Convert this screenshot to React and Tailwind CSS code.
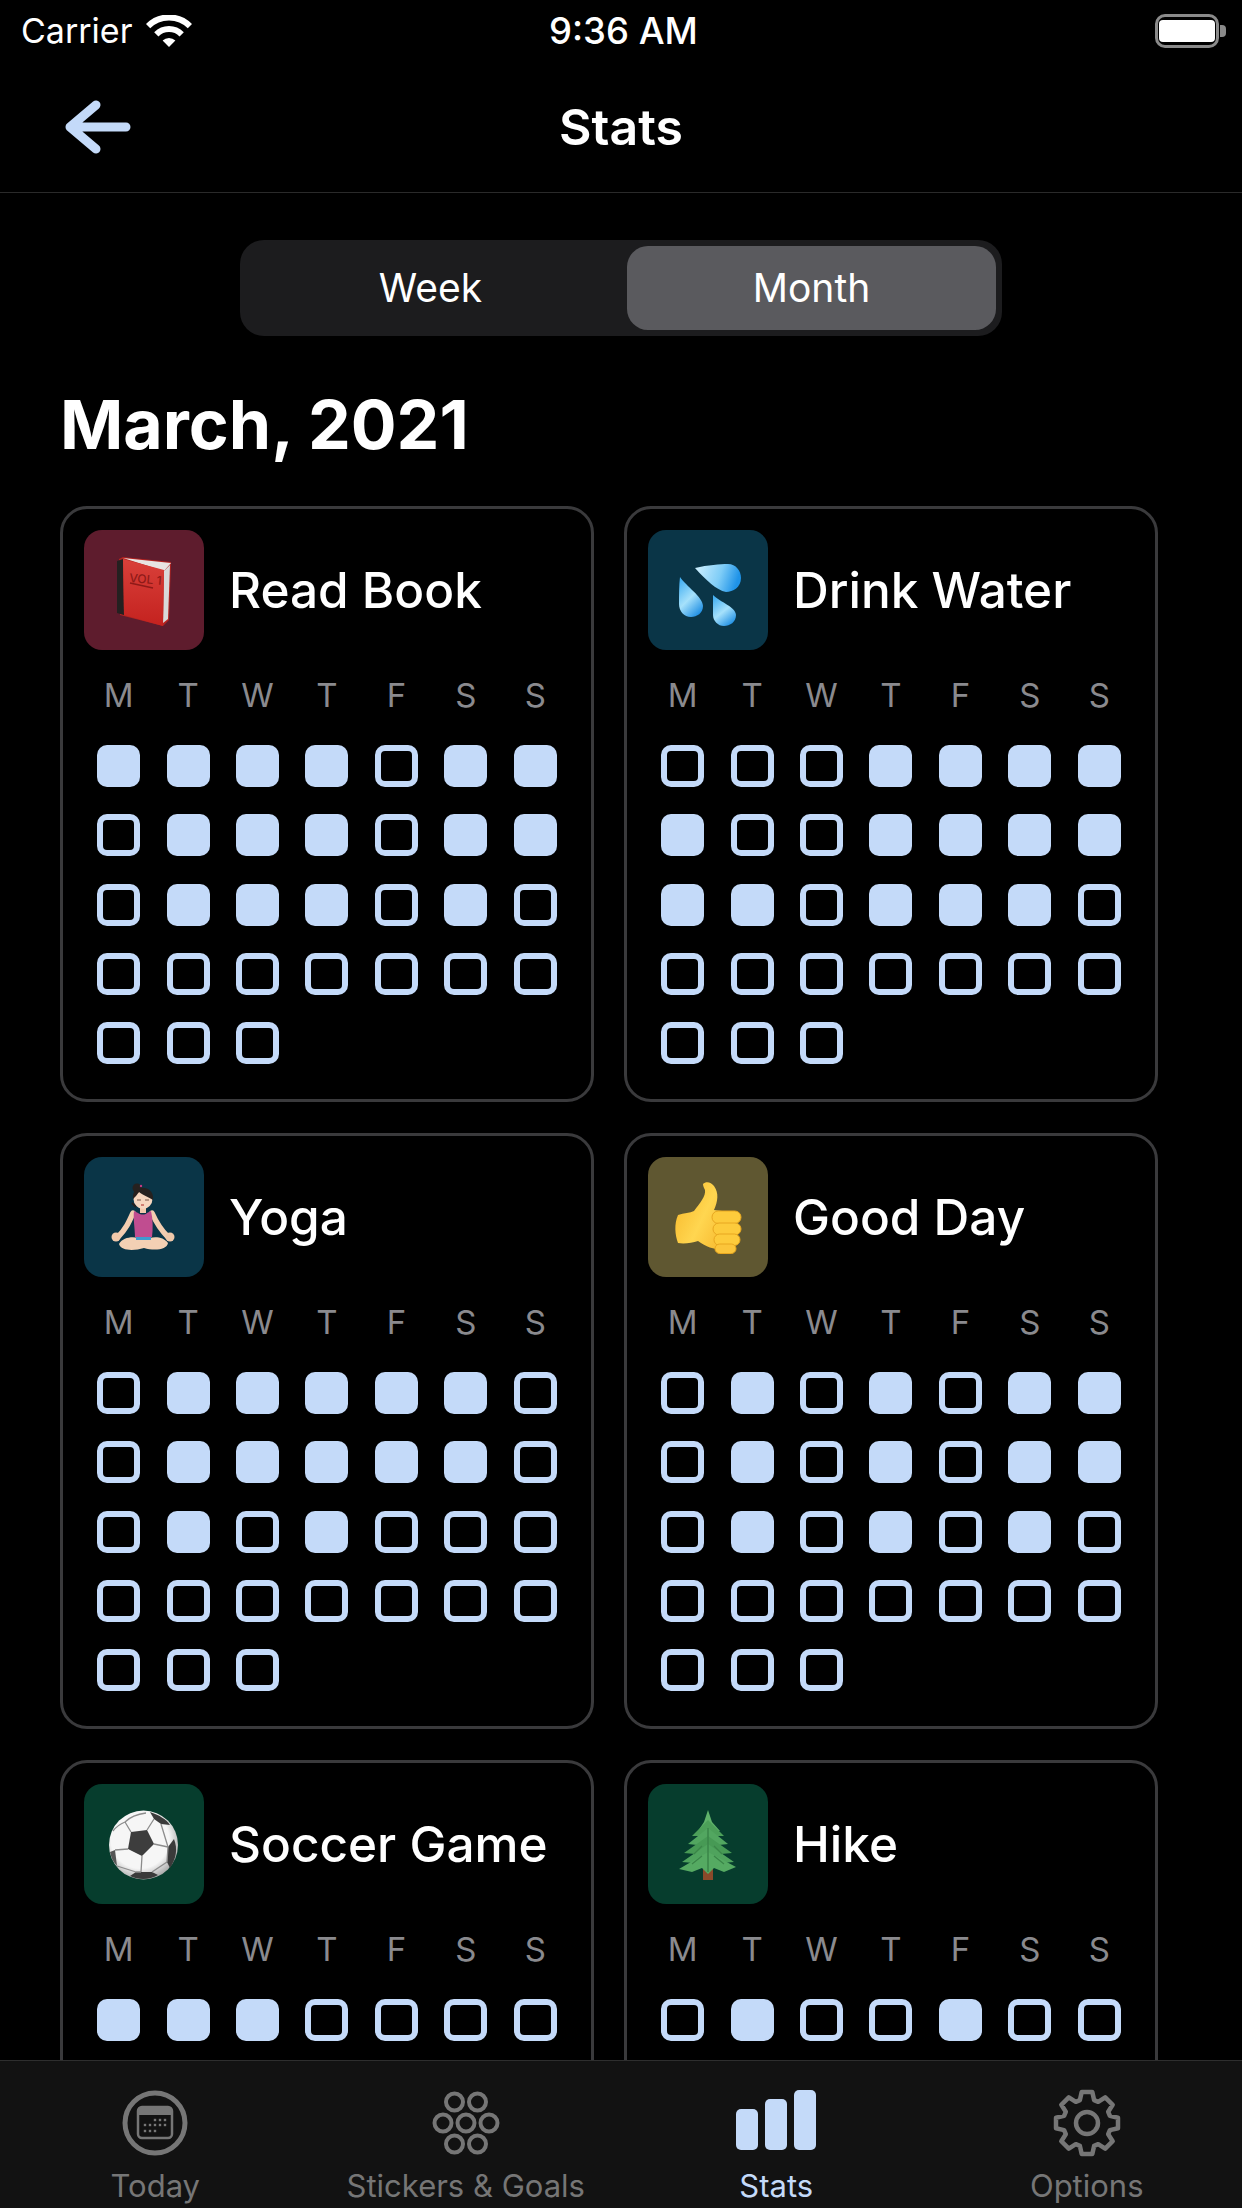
import React from "react";

const weekDays = ["M", "T", "W", "T", "F", "S", "S"];

const BookIcon = () => (
    <svg viewBox="0 0 120 120" className="w-full h-full">
        <defs>
            <linearGradient id="bookRed" x1="0" y1="0" x2="0" y2="1">
                <stop offset="0" stopColor="#d9403a" />
                <stop offset="1" stopColor="#c4221f" />
            </linearGradient>
        </defs>
        <polygon points="35,29 39,27 87,32 85,90 79,96 36,85" fill="#b32320" />
        <polygon points="80,41 86,35 84,89 79,93" fill="#d9d9d9" />
        <polygon points="39,28 87,33 80,41" fill="#e8e4e2" />
        <polygon points="33,31 39,29 40,85 33,83" fill="#242020" />
        <polygon points="39,29 80,40 79,96 40,85" fill="url(#bookRed)" />
        <text x="45" y="52" fontSize="12" fontFamily="Inter, sans-serif" fontWeight="500" fill="#8f1a18" transform="rotate(5 45 52)">VOL 1</text>
        <line x1="46" y1="53" x2="69" y2="58" stroke="#8f1a18" strokeWidth="1.5" />
    </svg>
);

const WaterIcon = () => (
    <svg viewBox="0 0 120 120" className="w-full h-full">
        <defs>
            <linearGradient id="dropA" x1="0" y1="0" x2="1" y2="0.2">
                <stop offset="0" stopColor="#d4f2ff" />
                <stop offset="0.6" stopColor="#7fcdf7" />
                <stop offset="1" stopColor="#1f93e8" />
            </linearGradient>
            <linearGradient id="dropB" x1="0.2" y1="0" x2="0.8" y2="1">
                <stop offset="0" stopColor="#45b0f2" />
                <stop offset="0.5" stopColor="#a6e1fb" />
                <stop offset="1" stopColor="#178ae2" />
            </linearGradient>
        </defs>
        <path d="M47 38 C60 35 72 34 80 34 C88 34 93 41 93 48 C93 57 85 62 78 62 C68 60 58 50 47 38Z" fill="url(#dropA)" />
        <path d="M32 47 C38 56 55 67 55 76 C55 83 49 87 43 87 C36 87 31 81 31 74 C31 65 31 55 32 47Z" fill="url(#dropB)" />
        <path d="M65 65 C72 72 88 77 88 85 C88 92 82 96 76 96 C70 96 65 91 65 85 C65 78 65 72 65 65Z" fill="url(#dropB)" />
    </svg>
);

const YogaIcon = () => (
    <svg viewBox="0 0 120 120" className="w-full h-full">
        {/* arms */}
        <path d="M49 56 C45 65 42 72 34 80" stroke="#f3cdb0" strokeWidth="5.5" fill="none" strokeLinecap="round" />
        <path d="M68 56 C72 65 76 72 84 80" stroke="#f3cdb0" strokeWidth="5.5" fill="none" strokeLinecap="round" />
        <circle cx="32" cy="80" r="4.5" fill="#f0c8aa" />
        <circle cx="86" cy="80" r="4.5" fill="#f0c8aa" />
        {/* legs */}
        <path d="M35 87 C40 79 52 79 60 83 C68 79 79 79 84 86 C83 93 70 94 60 91 C50 94 37 94 35 87Z" fill="#f3d0b4" />
        <rect x="52" y="78" width="15" height="5" fill="#3f9bd0" />
        {/* top */}
        <path d="M50 54 L54 56 C57 58 61 58 63 56 L67 54 C69 62 69 72 68 80 L51 80 C51 72 49 62 50 54Z" fill="#c04d90" />
        <rect x="56" y="48" width="6" height="8" fill="#f1c9ac" />
        {/* head */}
        <ellipse cx="59" cy="42" rx="9.5" ry="10" fill="#f6d6bf" />
        <path d="M49 42 C48 32 55 30 60 31 C66 31 70 37 69 43 C65 40 58 38 55 35 C53 38 51 40 49 42Z" fill="#26211f" />
        <circle cx="53" cy="31" r="4.5" fill="#26211f" />
        <path d="M48 46 C50 48 51 49 52 50" stroke="#26211f" strokeWidth="2" fill="none" />
        <circle cx="57" cy="29" r="1.2" fill="#c23b84" />
        <path d="M53 43 h4 M61 43 h4" stroke="#6b4a3a" strokeWidth="0.9" />
        <path d="M57 48 h3" stroke="#c2574f" strokeWidth="1.4" />
    </svg>
);

const ThumbIcon = () => (
    <svg viewBox="0 0 120 120" className="w-full h-full">
        <defs>
            <linearGradient id="thumb" x1="0" y1="0" x2="1" y2="0.6">
                <stop offset="0" stopColor="#f7b526" />
                <stop offset="0.6" stopColor="#ffd650" />
                <stop offset="1" stopColor="#f8bd33" />
            </linearGradient>
        </defs>
        <path d="M55 27 C58 24 63 25 66 29 C71 36 70 44 66 53 L82 55 L80 92 C70 94 60 91 50 84 C44 86 36 87 30 86 C27 78 26 67 30 58 C36 56 42 56 46 54 C52 46 58 39 57 33 C56 31 55 29 55 27Z" fill="url(#thumb)" />
        <rect x="64" y="54" width="29" height="12.5" rx="6.2" fill="#fdcb3c" stroke="#e8a720" strokeWidth="1" />
        <rect x="65" y="66" width="28" height="12" rx="6" fill="#fdcb3c" stroke="#e8a720" strokeWidth="1" />
        <rect x="66" y="77" width="26" height="11.5" rx="5.7" fill="#fdcb3c" stroke="#e8a720" strokeWidth="1" />
        <rect x="67" y="87" width="21" height="9.5" rx="4.7" fill="#fbc53b" stroke="#e8a720" strokeWidth="1" />
    </svg>
);

const SoccerIcon = () => (
    <svg viewBox="0 0 120 120" className="w-full h-full">
        <defs>
            <radialGradient id="ball" cx="0.45" cy="0.42" r="0.6">
                <stop offset="0.7" stopColor="#f6f6f6" />
                <stop offset="1" stopColor="#a8a8a8" />
            </radialGradient>
        </defs>
        <circle cx="59.5" cy="61" r="34.5" fill="url(#ball)" />
        <polygon points="47,48 63,46 70,60 58,72 44,65" fill="#3d3d3d" />
        <path d="M66 28 C75 31 82 35 86 41 L77 40 L70 35Z" fill="#3a3a3a" />
        <path d="M90 55 C94 65 92 75 86 84 L83 78 L84 63Z" fill="#3a3a3a" />
        <path d="M46 92 L52 88 L68 88 L74 91 C66 96 54 96 46 92Z" fill="#3a3a3a" />
        <path d="M26 68 L31 66 L33 82 C29 78 27 73 26 68Z" fill="#555" />
        <path d="M47 48 L41 38 M63 46 L70 35 M70 60 L84 63 M58 72 L57 88 M44 65 L31 66 M41 38 C36 40 32 43 29 47 M41 38 C46 33 54 30 62 29 M77 40 L84 63 M84 63 L83 78 M33 82 L52 88 M83 78 L68 88 M57 88 L52 88" stroke="#8c8c8c" strokeWidth="1.3" fill="none" />
    </svg>
);

const TreeIcon = () => (
    <svg viewBox="0 0 120 120" className="w-full h-full">
        <rect x="55" y="84" width="10" height="12" fill="#8a4a2a" />
        <polygon points="60,26 64,38 72,47 50,47 56,38" fill="#5fb26a" />
        <polygon points="60,36 76,52 69,52 60,47 51,52 44,52" fill="#4c9f59" />
        <polygon points="60,44 80,60 71,61 60,55 49,61 40,60" fill="#52a660" />
        <polygon points="60,52 84,69 73,70 60,63 47,70 36,69" fill="#479a55" />
        <polygon points="60,60 86,78 74,79 60,71 46,79 34,78" fill="#4fa35d" />
        <polygon points="60,68 88,83 76,88 66,84 60,90 54,84 44,88 31,85" fill="#55aa62" />
        <path d="M60 60 L60 88 M60 44 L60 60" stroke="#3a8548" strokeWidth="1.5" />
        <path d="M46 70 L54 62 M74 70 L66 62 M44 80 L54 72 M76 80 L66 72" stroke="#3a8548" strokeWidth="1.2" />
    </svg>
);

const habits = [
    {
        name: "Read Book", icon: <BookIcon />, bg: "bg-[#5e1c2d]",
        rows: ["1111011", "0111011", "0111010"],
    },
    {
        name: "Drink Water", icon: <WaterIcon />, bg: "bg-[#0a3547]",
        rows: ["0001111", "1001111", "1101110"],
    },
    {
        name: "Yoga", icon: <YogaIcon />, bg: "bg-[#0a3547]",
        rows: ["0111110", "0111110", "0101000"],
    },
    {
        name: "Good Day", icon: <ThumbIcon />, bg: "bg-[#5f5731]",
        rows: ["0101011", "0101011", "0101010"],
    },
    {
        name: "Soccer Game", icon: <SoccerIcon />, bg: "bg-[#063d2d]",
        rows: ["1110000", "0000000", "0000000"],
    },
    {
        name: "Hike", icon: <TreeIcon />, bg: "bg-[#063d2d]",
        rows: ["0100100", "0000000", "0000000"],
    },
];

const HabitCard = ({ habit }) => {
    const days = (habit.rows.join("") + "0000000000").split("");

    return (
        <div className="border-[3px] border-[#3a3a3c] rounded-[27px] pt-[21px] px-[21px] pb-[35px]">
            <div className="flex items-center gap-[25px]">
                <div className={`w-[120px] h-[120px] rounded-[18px] shrink-0 ${habit.bg}`}>
                    {habit.icon}
                </div>
                <span className="text-[49.5px] leading-[60px] font-medium text-white">{habit.name}</span>
            </div>
            <div className="grid grid-cols-7 mt-[25px] h-[40px] items-center">
                {weekDays.map((d, i) => (
                    <span key={i} className="text-center text-[33px] leading-[40px] text-[#8a8a8e]">{d}</span>
                ))}
            </div>
            <div className="grid grid-cols-7 gap-y-[27.3px] mt-[30px]">
                {days.map((on, i) => (
                    <div key={i} className="flex justify-center">
                        <div className={`w-[43px] h-[42px] rounded-[10px] ${on === "1" ? "bg-[#c4daf9]" : "border-[6px] border-[#c4daf9]"}`} />
                    </div>
                ))}
            </div>
        </div>
    );
};

const gearPath = () => {
    // 8 squarish teeth round the centre
    const pts = [];
    for (let i = 0; i < 8; i++) {
        const a = (i * Math.PI) / 4 - Math.PI / 2;
        [[-0.3, 24], [-0.17, 31.5], [0.17, 31.5], [0.3, 24]].forEach(([da, r]) => {
            pts.push(`${(34 + r * Math.cos(a + da)).toFixed(1)} ${(34 + r * Math.sin(a + da)).toFixed(1)}`);
        });
    }
    return `M${pts.join("L")}Z`;
};

const TodayIcon = () => (
    <svg width="66" height="66" viewBox="0 0 66 66">
        <circle cx="33" cy="33" r="30" fill="none" stroke="#767676" strokeWidth="5" />
        <rect x="16" y="17" width="34" height="31" rx="4" fill="none" stroke="#767676" strokeWidth="2.5" />
        <path d="M16 21 a4 4 0 0 1 4 -4 h26 a4 4 0 0 1 4 4 v4 h-34z" fill="#767676" />
        {[[33, 30], [38, 30], [43, 30], [23, 35], [28, 35], [33, 35], [38, 35], [43, 35], [23, 41], [28, 41], [33, 41]].map(([x, y], i) => (
            <rect key={i} x={x - 1.2} y={y - 1.2} width="2.4" height="2.4" fill="#767676" />
        ))}
    </svg>
);

const StickersIcon = () => (
    <svg width="68" height="64" viewBox="0 0 68 64">
        {[[22.5, 11], [45.5, 11], [11, 32], [34, 32], [57, 32], [22.5, 53], [45.5, 53]].map(([x, y], i) => (
            <circle key={i} cx={x} cy={y} r="8.5" fill="none" stroke="#767676" strokeWidth="4" />
        ))}
    </svg>
);

const StatsIcon = () => (
    <div className="flex items-end gap-[7px] h-[60px] w-[80px] mb-[6px]">
        <div className="w-[22px] h-[41px] rounded-[5px] bg-[#c4daf9]" />
        <div className="w-[22px] h-[51px] rounded-[5px] bg-[#c4daf9]" />
        <div className="w-[22px] h-[60px] rounded-[5px] bg-[#c4daf9]" />
    </div>
);

const OptionsIcon = () => (
    <svg width="68" height="68" viewBox="0 0 68 68">
        <path d={gearPath()} fill="none" stroke="#767676" strokeWidth="4.5" strokeLinejoin="round" />
        <circle cx="34" cy="34" r="11" fill="none" stroke="#767676" strokeWidth="4.5" />
    </svg>
);

const tabs = [
    { label: "Today", icon: <TodayIcon />, color: "text-[#767676]" },
    { label: "Stickers & Goals", icon: <StickersIcon />, color: "text-[#767676]" },
    { label: "Stats", icon: <StatsIcon />, color: "text-[#c4daf9]" },
    { label: "Options", icon: <OptionsIcon />, color: "text-[#767676]" },
];

export default function App() {
    return (
        <div className="w-[1242px] h-[2208px] bg-black text-white flex flex-col overflow-hidden font-['Inter',sans-serif]">
            {/* Status bar */}
            <div className="h-[62px] shrink-0 grid grid-cols-3 items-center pl-[21px] pr-[16px]">
                <div className="flex items-center gap-[14px]">
                    <span className="text-[34px] leading-[44px]">Carrier</span>
                    <svg width="46" height="33" viewBox="0 0 46 33">
                        <path d="M2.1 11.1 A29.5 29.5 0 0 1 43.9 11.1" fill="none" stroke="#fff" strokeWidth="6" />
                        <path d="M10.3 19.3 A18 18 0 0 1 35.7 19.3" fill="none" stroke="#fff" strokeWidth="6" />
                        <path d="M23 32 L16.6 25.6 A9 9 0 0 1 29.4 25.6Z" fill="#fff" />
                    </svg>
                </div>
                <span className="text-center text-[36.5px] leading-[44px] font-medium">9:36 AM</span>
                <div className="flex items-center justify-end gap-[1px]">
                    <div className="w-[64px] h-[34px] border-[3px] border-[#8a8a8a] rounded-[10px] px-[1px] py-[3px]">
                        <div className="w-full h-full bg-white rounded-[4px]" />
                    </div>
                    <div className="w-[6px] h-[12px] bg-[#8a8a8a] rounded-r-[4px]" />
                </div>
            </div>

            {/* Nav bar */}
            <div className="h-[131px] shrink-0 grid grid-cols-[1fr_auto_1fr] items-center border-b border-[#2a2a2a]">
                <div className="pl-[65px]">
                    <svg width="66" height="54" viewBox="0 0 66 54" className="block">
                        <path d="M5 27 H61 M31 5 L5 27 L31 49" fill="none" stroke="#c4daf9" strokeWidth="9" strokeLinecap="round" strokeLinejoin="round" />
                    </svg>
                </div>
                <span className="text-[50px] leading-[58px] font-semibold">Stats</span>
                <span />
            </div>

            <div className="flex-1 min-h-0 overflow-hidden">
                {/* Week / Month */}
                <div className="w-[762px] h-[96px] mx-auto mt-[47px] rounded-[24px] bg-[#1c1c1e] flex gap-[12px] p-[6px]">
                    <div className="w-[369px] flex items-center justify-center text-[39px]">Week</div>
                    <div className="w-[369px] rounded-[21px] bg-[#5a5a5e] flex items-center justify-center text-[39px]">Month</div>
                </div>

                <div className="pl-[60px]">
                    <h1 className="text-[68px] leading-[82px] font-bold mt-[47px] mb-[41px]">March, 2021</h1>
                    <div className="grid grid-cols-[534px_534px] gap-x-[30px] gap-y-[31px]">
                        {habits.map((h) => (
                            <HabitCard key={h.name} habit={h} />
                        ))}
                    </div>
                </div>
            </div>

            {/* Tab bar */}
            <div className="h-[148px] shrink-0 bg-[#121212] border-t border-[#2e2e2e] grid grid-cols-4">
                {tabs.map((t) => (
                    <div key={t.label} className="flex flex-col items-center">
                        <div className="h-[68px] mt-[28px] flex items-center justify-center">{t.icon}</div>
                        <span className={`text-[31px] leading-[36px] mt-[11px] ${t.color}`}>{t.label}</span>
                    </div>
                ))}
            </div>
        </div>
    );
}
